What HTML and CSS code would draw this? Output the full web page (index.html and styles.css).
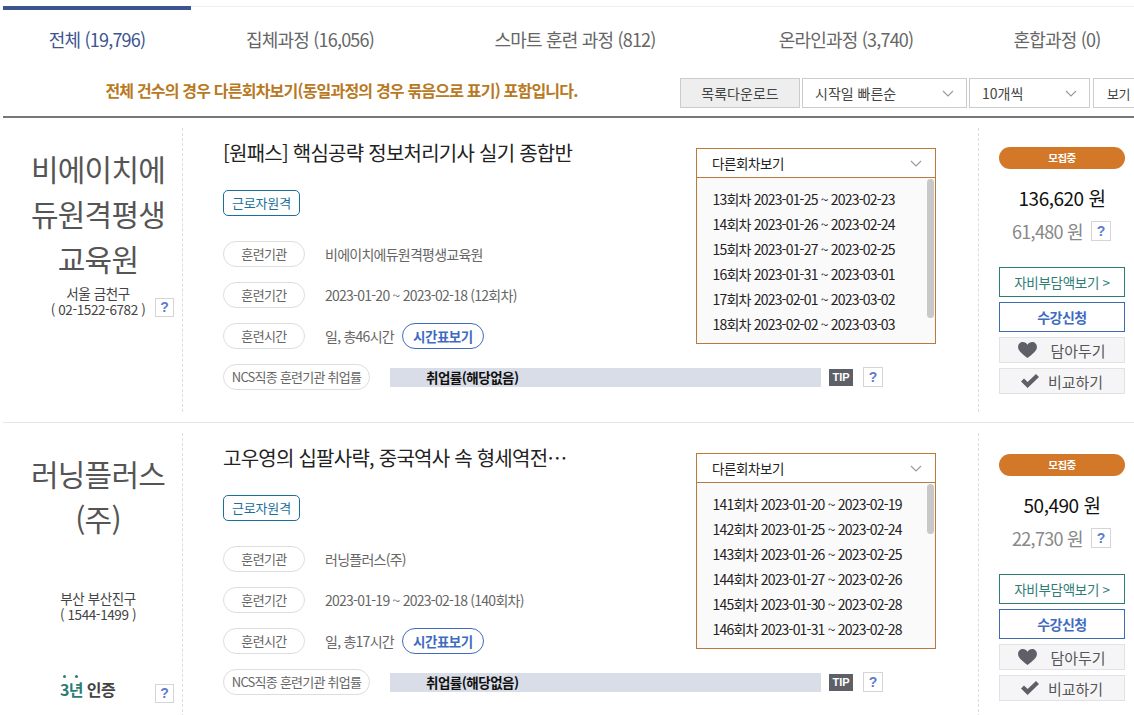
FILE: index.html
```html
<!DOCTYPE html>
<html lang="ko">
<head>
<meta charset="utf-8">
<title>훈련과정 목록</title>
<link rel="stylesheet" href="styles.css">
</head>
<body>
<div class="page">
  <nav class="tabs">
    <a class="tab tab-active">전체 (19,796)</a>
    <a class="tab">집체과정 (16,056)</a>
    <a class="tab">스마트 훈련 과정 (812)</a>
    <a class="tab">온라인과정 (3,740)</a>
    <a class="tab">혼합과정 (0)</a>
  </nav>
  <div class="toolbar">
    <p class="notice">전체 건수의 경우 다른회차보기(동일과정의 경우 묶음으로 표기) 포함입니다.</p>
    <button class="btn-download">목록다운로드</button>
    <div class="select select-sort">시작일 빠른순<svg class="chev" viewBox="0 0 12 7"><path d="M1 1l5 5 5-5"/></svg></div>
    <div class="select select-count">10개씩<svg class="chev" viewBox="0 0 12 7"><path d="M1 1l5 5 5-5"/></svg></div>
    <button class="btn-view">보기</button>
  </div>

  <article class="card">
    <div class="org">
      <h2 class="org-name">비에이치에 듀원격평생 교육원</h2>
      <div class="org-where">
        <div class="org-addr">서울 금천구<br>( 02-1522-6782 )</div>
        <span class="help">?</span>
      </div>
    </div>
    <div class="main">
      <div class="info">
        <h3 class="title">[원패스] 핵심공략 정보처리기사 실기 종합반</h3>
        <span class="tag">근로자원격</span>
        <div class="row row-first"><span class="pill">훈련기관</span><span class="val">비에이치에듀원격평생교육원</span></div>
        <div class="row"><span class="pill">훈련기간</span><span class="val">2023-01-20 ~ 2023-02-18 (12회차)</span></div>
        <div class="row"><span class="pill">훈련시간</span><span class="val">일, 총46시간</span><span class="btn-time">시간표보기</span></div>
      </div>
      <div class="rounds">
        <div class="rounds-head">다른회차보기<svg class="chev" viewBox="0 0 12 7"><path d="M1 1l5 5 5-5"/></svg></div>
        <ul class="rounds-list">
          <li>13회차 2023-01-25 ~ 2023-02-23</li>
          <li>14회차 2023-01-26 ~ 2023-02-24</li>
          <li>15회차 2023-01-27 ~ 2023-02-25</li>
          <li>16회차 2023-01-31 ~ 2023-03-01</li>
          <li>17회차 2023-02-01 ~ 2023-03-02</li>
          <li>18회차 2023-02-02 ~ 2023-03-03</li>
        </ul>
        <span class="thumb"></span>
      </div>
      <div class="rate">
        <span class="pill pill-wide">NCS직종 훈련기관 취업률</span>
        <div class="rate-bar">취업률(해당없음)</div>
        <span class="tip">TIP</span>
        <span class="help help-wide">?</span>
      </div>
    </div>
    <div class="side">
      <div class="status">모집중</div>
      <div class="price">136,620 원</div>
      <div class="self-price"><span>61,480 원</span><span class="help help-wide">?</span></div>
      <a class="act act-self">자비부담액보기 &gt;</a>
      <a class="act act-apply">수강신청</a>
      <a class="act act-soft"><svg class="ic-heart" viewBox="0 0 20 17"><path d="M10 17C4 12 0 9.300 0 5.200 0 2.200 2.300 0 5.100 0 7 0 8.900 1 10 2.800 11.100 1 13 0 14.900 0 17.700 0 20 2.200 20 5.200 20 9.300 16 12 10 17z"/></svg>담아두기</a>
      <a class="act act-soft"><svg class="ic-check" viewBox="0 0 18 14"><path d="M0 7.500l3-3 3.600 3.500L15 0l3 3-11.400 11z"/></svg>비교하기</a>
    </div>
  </article>

  <article class="card">
    <div class="org">
      <h2 class="org-name">러닝플러스<br>(주)</h2>
      <div class="org-where">
        <div class="org-addr">부산 부산진구<br>( 1544-1499 )</div>
      </div>
      <div class="org-where org-cert">
        <div class="cert"><span class="cert-years">3년</span> 인증</div>
        <span class="help">?</span>
      </div>
    </div>
    <div class="main">
      <div class="info">
        <h3 class="title">고우영의 십팔사략, 중국역사 속 형세역전…</h3>
        <span class="tag">근로자원격</span>
        <div class="row row-first"><span class="pill">훈련기관</span><span class="val">러닝플러스(주)</span></div>
        <div class="row"><span class="pill">훈련기간</span><span class="val">2023-01-19 ~ 2023-02-18 (140회차)</span></div>
        <div class="row"><span class="pill">훈련시간</span><span class="val">일, 총17시간</span><span class="btn-time">시간표보기</span></div>
      </div>
      <div class="rounds">
        <div class="rounds-head">다른회차보기<svg class="chev" viewBox="0 0 12 7"><path d="M1 1l5 5 5-5"/></svg></div>
        <ul class="rounds-list">
          <li>141회차 2023-01-20 ~ 2023-02-19</li>
          <li>142회차 2023-01-25 ~ 2023-02-24</li>
          <li>143회차 2023-01-26 ~ 2023-02-25</li>
          <li>144회차 2023-01-27 ~ 2023-02-26</li>
          <li>145회차 2023-01-30 ~ 2023-02-28</li>
          <li>146회차 2023-01-31 ~ 2023-02-28</li>
        </ul>
        <span class="thumb thumb-short"></span>
      </div>
      <div class="rate">
        <span class="pill pill-wide">NCS직종 훈련기관 취업률</span>
        <div class="rate-bar">취업률(해당없음)</div>
        <span class="tip">TIP</span>
        <span class="help help-wide">?</span>
      </div>
    </div>
    <div class="side">
      <div class="status">모집중</div>
      <div class="price">50,490 원</div>
      <div class="self-price"><span>22,730 원</span><span class="help help-wide">?</span></div>
      <a class="act act-self">자비부담액보기 &gt;</a>
      <a class="act act-apply">수강신청</a>
      <a class="act act-soft"><svg class="ic-heart" viewBox="0 0 20 17"><path d="M10 17C4 12 0 9.300 0 5.200 0 2.200 2.300 0 5.100 0 7 0 8.900 1 10 2.800 11.100 1 13 0 14.900 0 17.700 0 20 2.200 20 5.200 20 9.300 16 12 10 17z"/></svg>담아두기</a>
      <a class="act act-soft"><svg class="ic-check" viewBox="0 0 18 14"><path d="M0 7.500l3-3 3.600 3.500L15 0l3 3-11.400 11z"/></svg>비교하기</a>
    </div>
  </article>
</div>
</body>
</html>
```
FILE: styles.css
```css
* { box-sizing: border-box; }
html, body { margin: 0; padding: 0; background: #fff; }
body {
  width: 1134px;
  height: 715px;
  overflow: hidden;
  font-family: "Noto Sans CJK KR", "Noto Sans", sans-serif;
  color: #555;
  letter-spacing: -0.5px;
}
.page { padding: 6px 0 0 3px; width: 1134px; }

.tabs {
  display: grid;
  grid-template-columns: 188px 238px 292px 250px 172px;
  height: 60px;
  border-top: 1px solid #eee;
  width: 1140px;
}
.tab {
  display: block;
  margin-top: -1px;
  padding-top: 16px;
  text-align: center;
  font-size: 18px;
  line-height: 26px;
  letter-spacing: -0.8px;
  color: #666;
  border-top: 4px solid transparent;
}
.tab-active { border-top-color: #3c5590; color: #3c5590; }

.toolbar {
  display: flex;
  align-items: flex-start;
  height: 52px;
  padding-top: 12px;
  width: 1150px;
  border-bottom: 2px solid #777;
}
.notice {
  flex: none;
  width: 677px;
  margin: 0;
  text-align: center;
  font-size: 16px;
  line-height: 24px;
  font-weight: 700;
  letter-spacing: -0.8px;
  color: #b8791f;
}
.btn-download, .btn-view, .select {
  flex: none;
  height: 30px;
  font: inherit;
  font-size: 14px;
  letter-spacing: 0;
  color: #444;
  border: 1px solid #ccc;
  background: #fff;
}
.btn-download { width: 120px; background: #eee; padding: 0; }
.select {
  display: flex;
  align-items: center;
  justify-content: space-between;
  margin-left: 2px;
  padding: 0 12px;
  line-height: 28px;
}
.select-sort { width: 165px; }
.select-count { width: 121px; }
.btn-view { width: 60px; margin-left: 3px; padding: 0 0 0 13px; text-align: left; font-size: 13px; letter-spacing: -0.5px; }
.chev { width: 12px; height: 7px; fill: none; stroke: #999; stroke-width: 1.1; flex: none; }

.card {
  display: grid;
  grid-template-columns: 180px 796px 155px;
  width: 1131px;
  height: 305px;
  padding-top: 10px;
  border-bottom: 1px solid #e6e6e6;
}

.org { height: 284px; border-right: 1px dashed #ddd; padding-top: 18px; }
.org-name {
  height: 135px;
  margin: 0 0 4px;
  padding: 0 0 0 11px;
  text-align: center;
  font-size: 30px;
  line-height: 45px;
  font-weight: 400;
  color: #555;
  letter-spacing: -0.8px;
  word-break: keep-all;
}
.org-where {
  display: grid;
  grid-template-columns: 96px 19px;
  column-gap: 9px;
  align-items: end;
  padding-left: 47px;
}
.org-addr {
  white-space: nowrap;
  text-align: center;
  font-size: 13.500px;
  line-height: 16px;
  color: #444;
  letter-spacing: -0.4px;
}
.org-cert { margin-top: 57px; }
.cert { padding: 0 0 4px 10px; white-space: nowrap; font-size: 16px; line-height: 20px; font-weight: 700; color: #444; letter-spacing: -0.6px; }
.cert-years { position: relative; color: #2a7d75; }
.cert-years::before {
  content: "";
  position: absolute;
  left: 3px;
  top: -2px;
  width: 3px;
  height: 3px;
  border-radius: 50%;
  background: #2a7d75;
  box-shadow: 12px 0 0 #2a7d75;
}
.help {
  display: block;
  width: 19px;
  height: 19px;
  border: 1px solid #d5d5d5;
  background: #fff;
  text-align: center;
  font-family: "Liberation Sans", sans-serif;
  font-size: 14px;
  line-height: 17px;
  font-weight: 700;
  color: #5c7bd0;
  letter-spacing: 0;
}
.help-wide { width: 20px; height: 20px; line-height: 18px; }

.main {
  display: grid;
  grid-template-columns: 473px 240px;
  padding-left: 40px;
  align-content: start;
  height: 284px;
  border-right: 1px dashed #ddd;
}
.title {
  margin: 0;
  padding-top: 11px;
  font-size: 20px;
  line-height: 28px;
  font-weight: 400;
  color: #222;
  white-space: nowrap;
  letter-spacing: -0.75px;
}
.tag {
  display: block;
  width: 77px;
  height: 26px;
  margin-top: 23px;
  border: 1px solid #1a6f9c;
  border-radius: 5px;
  text-align: center;
  font-size: 13px;
  line-height: 24px;
  color: #1a6f9c;
  letter-spacing: -0.2px;
}
.row { display: flex; align-items: center; height: 26px; margin-top: 15px; }
.row-first { margin-top: 25px; }
.pill {
  flex: none;
  display: block;
  width: 82px;
  height: 26px;
  border: 1px solid #ddd;
  border-radius: 13px;
  text-align: center;
  font-size: 13px;
  line-height: 24px;
  color: #666;
  letter-spacing: -0.6px;
}
.val { margin-left: 20px; font-size: 14px; color: #666; letter-spacing: -0.75px; }
.btn-time {
  width: 82px;
  height: 26px;
  margin-left: 8px;
  border: 1px solid #3f6cc0;
  border-radius: 13px;
  text-align: center;
  font-size: 13.500px;
  line-height: 24px;
  font-weight: 700;
  color: #3f6cc0;
}

.rounds {
  position: relative;
  height: 196px;
  margin-top: 20px;
  border: 1px solid #b87a3c;
}
.rounds-head {
  display: flex;
  align-items: center;
  justify-content: space-between;
  height: 29px;
  padding: 0 13px 0 15px;
  border-bottom: 1px solid #b87a3c;
  font-size: 13.500px;
  letter-spacing: -0.4px;
  color: #222;
}
.rounds-list {
  height: 165px;
  margin: 0;
  padding: 9px 0 0 15.500px;
  list-style: none;
  overflow: hidden;
  background: #fafafa;
}
.rounds-list li { height: 25px; font-size: 14px; line-height: 25px; color: #222; letter-spacing: -0.8px; white-space: nowrap; }
.thumb {
  position: absolute;
  top: 30px;
  right: 1px;
  width: 7px;
  height: 139px;
  border-radius: 4px;
  background: #c8c8c8;
}
.thumb-short { height: 50px; }

.rate {
  grid-column: 1 / -1;
  display: flex;
  align-items: center;
  height: 26px;
  margin-top: 15px;
}
.pill-wide { width: 147px; letter-spacing: -0.75px; }
.rate-bar {
  width: 431px;
  height: 19px;
  margin-left: 20px;
  padding-left: 36px;
  background: #d8dde8;
  font-size: 13.500px;
  line-height: 19px;
  font-weight: 700;
  color: #111;
}
.tip {
  width: 24px;
  height: 17px;
  margin-left: 8px;
  background: #5f5f67;
  text-align: center;
  font-family: "Liberation Sans", sans-serif;
  font-size: 11px;
  line-height: 17px;
  font-weight: 700;
  color: #fff;
  letter-spacing: 0;
}
.rate .help { margin-left: 10px; }

.side { padding: 19px 0 0 20px; }
.card + .card .side { padding-top: 21px; }
.status {
  width: 126px;
  height: 22px;
  border-radius: 11px;
  background: #d27828;
  text-align: center;
  font-size: 10.500px;
  line-height: 21px;
  font-weight: 700;
  color: #fff;
}
.price {
  width: 144px;
  margin: 16px 0 0 -9px;
  text-align: center;
  font-size: 19px;
  line-height: 26px;
  color: #111;
}
.self-price {
  display: flex;
  align-items: center;
  margin-top: 6px;
  height: 28px;
  padding-left: 13px;
  font-size: 18px;
  letter-spacing: -0.7px;
  color: #888;
}
.self-price .help { margin-left: 8px; }
.act { display: flex; align-items: center; justify-content: center; width: 126px; color: #555; }
.act-self {
  height: 30px;
  margin-top: 22px;
  border: 1px solid #2e7d74;
  font-size: 13.500px;
  letter-spacing: -0.3px;
  color: #2e7d74;
}
.act-apply {
  height: 30px;
  margin-top: 5px;
  border: 1px solid #3f6cb0;
  font-size: 14px;
  font-weight: 700;
  color: #3f6cc0;
}
.act-soft {
  height: 26px;
  margin-top: 5px;
  border: 1px solid #e2e2e2;
  background: #f5f5f7;
  font-size: 15px;
  letter-spacing: 0;
}
.ic-heart { width: 19px; height: 16px; fill: #5f5f67; margin-right: 13px; }
.ic-check { width: 18px; height: 14px; fill: #5f5f67; margin-right: 9px; }
```
